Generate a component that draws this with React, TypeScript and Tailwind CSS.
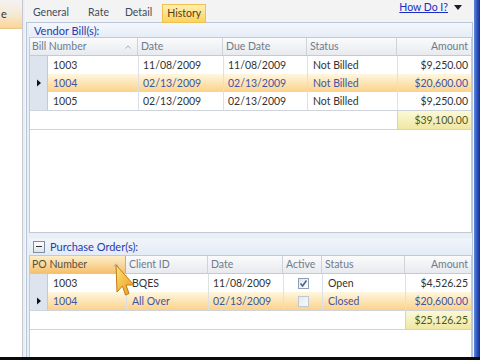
import React from "react";

const font = { fontFamily: 'Lato, "Open Sans", sans-serif' };

function SortGlyph() {
  return (
    <svg width="6" height="4" viewBox="0 0 6 4" className="shrink-0">
      <path d="M0.5 3.5 L3 0.8 L5.5 3.5" fill="none" stroke="#a8b0bc" strokeWidth="1" />
    </svg>
  );
}

function Arrow() {
  return (
    <svg width="6" height="8" viewBox="0 0 6 8">
      <path d="M1 0.5 L5 4 L1 7.5 Z" fill="#111" />
    </svg>
  );
}

function Check({ checked, dim }: { checked: boolean; dim?: boolean }) {
  return (
    <div
      className={
        "w-[11px] h-[11px] border flex items-center justify-center " +
        (dim
          ? "border-[#c2c8d2] bg-gradient-to-br from-[#e6e9ee] to-[#f8f9fa]"
          : "border-[#8e9fb8] bg-gradient-to-br from-[#dfe5ee] to-[#ffffff]")
      }
    >
      {checked && (
        <svg width="9" height="9" viewBox="0 0 9 9">
          <path d="M1.5 4.5 L3.6 7 L7.5 1.5" fill="none" stroke="#4f6386" strokeWidth="1.6" />
        </svg>
      )}
    </div>
  );
}

const hdr =
  "h-full flex items-center px-[3px] border-r border-[#cdd3db] bg-gradient-to-b from-[#fbfbfc] to-[#e7eaee] text-[#6e7c8b]";

function VendorGrid() {
  const rows = [
    { n: "1003", d: "11/08/2009", dd: "11/08/2009", s: "Not Billed", a: "$9,250.00", sel: false },
    { n: "1004", d: "02/13/2009", dd: "02/13/2009", s: "Not Billed", a: "$20,600.00", sel: true },
    { n: "1005", d: "02/13/2009", dd: "02/13/2009", s: "Not Billed", a: "$9,250.00", sel: false },
  ];
  const cols = "grid grid-cols-[18px_91px_85px_84px_90px_1fr]";
  return (
    <div className="w-[443px] h-[196px] border border-[#c3cad4] bg-white flex flex-col">
      <div className="h-[18px] grid grid-cols-[108px_85px_84px_90px_1fr] border-b border-[#c3cad4]">
        <div className={hdr + " justify-between pl-[2px] pr-[6px]"}>
          <span>Bill Number</span>
          <SortGlyph />
        </div>
        <div className={hdr}>Date</div>
        <div className={hdr}>Due Date</div>
        <div className={hdr}>Status</div>
        <div className={hdr + " justify-end border-r-0"}>Amount</div>
      </div>
      {rows.map((r) => (
        <div
          key={r.n}
          className={
            cols +
            " h-[18px] " +
            (r.sel
              ? "bg-gradient-to-b from-[#fff6e0] to-[#fbd288] text-[#3d55a5]"
              : "text-[#333]")
          }
        >
          <div className="h-full bg-[#dde4ee] border-r border-[#c3cad4] flex items-center justify-center">
            {r.sel && <Arrow />}
          </div>
          <div className="h-full flex items-center pl-[5px] border-r border-[#dde1e6]">{r.n}</div>
          <div className="h-full flex items-center pl-[4px] border-r border-[#dde1e6]">{r.d}</div>
          <div className="h-full flex items-center pl-[4px] border-r border-[#dde1e6]">{r.dd}</div>
          <div className="h-full flex items-center pl-[5px] border-r border-[#dde1e6]">{r.s}</div>
          <div className="h-full flex items-center justify-end pr-[3px]">{r.a}</div>
        </div>
      ))}
      <div className="h-[20px] border-y border-[#cfd4db] flex justify-end">
        <div className="w-[74px] h-full border-l border-[#d8d6b8] bg-gradient-to-b from-[#fcf9d8] to-[#efe7a2] text-[#4c5a1e] flex items-center justify-end pr-[3px]">
          $39,100.00
        </div>
      </div>
      <div className="flex-1 bg-white" />
    </div>
  );
}

function POGrid() {
  const cols = "grid grid-cols-[18px_79px_82px_75px_39px_83px_1fr]";
  const rows = [
    { n: "1003", c: "BQES", d: "11/08/2009", ac: true, s: "Open", a: "$4,526.25", sel: false },
    { n: "1004", c: "All Over", d: "02/13/2009", ac: false, s: "Closed", a: "$20,600.00", sel: true },
  ];
  return (
    <div className="w-[443px] flex-1 border-x border-t border-[#c3cad4] bg-white flex flex-col">
      <div className="h-[18px] grid grid-cols-[96px_82px_75px_39px_83px_1fr] border-b border-[#c3cad4]">
        <div className="h-full flex items-center justify-between pl-[2px] pr-[6px] border-r border-[#e2a850] bg-gradient-to-b from-[#fdeec8] to-[#f5c06c] text-[#5a5040]">
          <span>PO Number</span>
          <SortGlyph />
        </div>
        <div className={hdr}>Client ID</div>
        <div className={hdr}>Date</div>
        <div className={hdr}>Active</div>
        <div className={hdr}>Status</div>
        <div className={hdr + " justify-end border-r-0"}>Amount</div>
      </div>
      {rows.map((r) => (
        <div
          key={r.n}
          className={
            cols +
            " h-[18px] " +
            (r.sel
              ? "bg-gradient-to-b from-[#fff6e0] to-[#fbd288] text-[#3d55a5]"
              : "text-[#333]")
          }
        >
          <div className="h-full bg-[#dde4ee] border-r border-[#c3cad4] flex items-center justify-center">
            {r.sel && <Arrow />}
          </div>
          <div className="h-full flex items-center pl-[5px] border-r border-[#dde1e6]">{r.n}</div>
          <div className="h-full flex items-center pl-[5px] border-r border-[#dde1e6]">{r.c}</div>
          <div className="h-full flex items-center pl-[4px] border-r border-[#dde1e6]">{r.d}</div>
          <div className="h-full flex items-center justify-center border-r border-[#dde1e6]">
            <Check checked={r.ac} dim={!r.ac} />
          </div>
          <div className="h-full flex items-center pl-[5px] border-r border-[#dde1e6]">{r.s}</div>
          <div className="h-full flex items-center justify-end pr-[3px]">{r.a}</div>
        </div>
      ))}
      <div className="h-[20px] border-y border-[#cfd4db] flex justify-end">
        <div className="w-[66px] h-full border-l border-[#d8d6b8] bg-gradient-to-b from-[#fcf9d8] to-[#efe7a2] text-[#4c5a1e] flex items-center justify-end pr-[3px]">
          $25,126.25
        </div>
      </div>
      <div className="flex-1 bg-white" />
    </div>
  );
}

function Cursor() {
  return (
    <svg
      width="22"
      height="34"
      viewBox="0 0 22 34"
      className="absolute left-[114px] top-[264px]"
    >
      <defs>
        <linearGradient id="cg" x1="0" y1="0" x2="1" y2="1">
          <stop offset="0" stopColor="#fde27a" />
          <stop offset="1" stopColor="#e99a1c" />
        </linearGradient>
      </defs>
      <path
        d="M2 1 L3 28 L8.5 22 L11.5 31 L15 29.5 L12 21 L20 21 Z"
        fill="url(#cg)"
        stroke="#c27a12"
        strokeWidth="1"
        strokeLinejoin="round"
      />
    </svg>
  );
}

export default function App() {
  return (
    <div
      className="w-[480px] h-[360px] overflow-hidden relative flex flex-col bg-[#f3f3f3] text-[10.5px] leading-none"
      style={font}
    >
      <div className="flex flex-1 min-h-0">
        {/* left nav */}
        <div className="w-[22px] flex flex-col bg-white">
          <div className="h-[29px] bg-gradient-to-b from-[#f3f3f2] via-[#f6ead6] to-[#fbd494] border-b border-[#e9c68a] text-[#333] pl-[1px] pt-[8px] text-[11px]">
            e
          </div>
          <div className="flex-1 bg-white" />
        </div>
        {/* separator */}
        <div className="w-[4px] flex">
          <div className="w-[1px] bg-[#c4c8ce]" />
          <div className="w-[2px] bg-[#eceef1]" />
          <div className="w-[1px] bg-[#f5f6f8]" />
        </div>
        {/* main */}
        <div className="w-[447px] flex flex-col">
          <div className="h-[22px] flex items-end relative">
            <div className="flex items-end h-full pl-[7px] text-[#3e4c5e] text-[10.5px]">
              <div className="h-[19px] flex items-center mr-[19px]">General</div>
              <div className="h-[19px] flex items-center mr-[16px]">Rate</div>
              <div className="h-[19px] flex items-center mr-[10px]">Detail</div>
              <div className="h-[19px] mb-[-1px] flex items-center px-[4px] border border-[#f0c050] bg-gradient-to-b from-[#ffefb0] to-[#fbd35a] text-[#5a3c12]">
                History
              </div>
            </div>
            <div className="absolute right-[11px] top-[2px] flex items-center gap-[6px] text-[10.5px]">
              <span className="text-[#1a2ec4] underline">How Do I?</span>
              <svg width="8" height="5" viewBox="0 0 8 5">
                <path d="M0 0 L8 0 L4 5 Z" fill="#1b1b2b" />
              </svg>
            </div>
          </div>
          <div className="flex-1 min-h-0 border-t border-x border-[#b6c5d9] bg-[#e9eff7] flex flex-col pl-[2px]">
            <div className="h-[14px] flex items-center pl-[5px] bg-gradient-to-b from-[#f4f7fb] to-[#e6edf7]">
              <span className="text-[#2839b0] text-[11px]">Vendor Bill(s):</span>
            </div>
            <VendorGrid />
            <div className="h-[5px]" />
            <div className="h-[17px] flex items-center pl-[4px] gap-[5px] bg-gradient-to-b from-[#f1f5fa] to-[#e4ebf5]">
              <div className="w-[12px] h-[12px] border border-[#7d8ea8] bg-gradient-to-b from-white to-[#dfe4ea] flex items-center justify-center">
                <div className="w-[6px] h-[1px] bg-[#333]" />
              </div>
              <span className="text-[#2839b0] text-[11px]">Purchase Order(s):</span>
            </div>
            <POGrid />
          </div>
        </div>
        {/* window border */}
        <div className="w-[1px] bg-[#f0f3f8]" />
        <div className="w-[6px] bg-gradient-to-r from-[#5d86dc] via-[#2f55c0] to-[#182e8a]" />
      </div>
      <div className="h-[3px] bg-[#0a0a0a]" />
      <Cursor />
    </div>
  );
}
